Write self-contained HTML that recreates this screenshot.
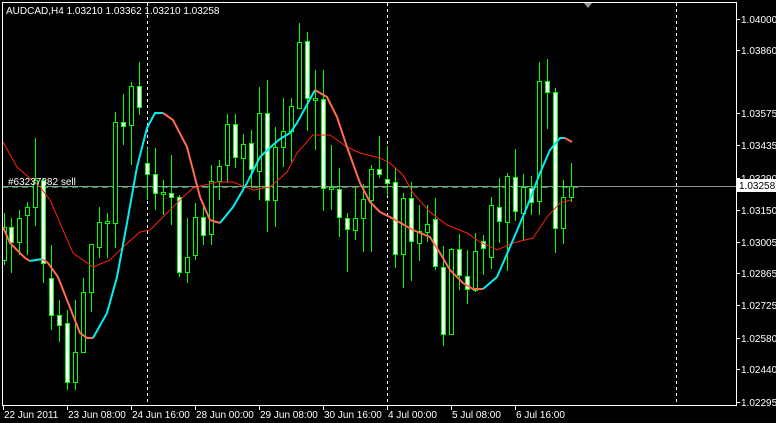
<!DOCTYPE html>
<html><head><meta charset="utf-8"><style>
html,body{margin:0;padding:0;background:#000;width:776px;height:423px;overflow:hidden}
svg{display:block}
text{font-family:"Liberation Sans",sans-serif;font-size:10px;fill:#fff}
</style></head><body>
<svg id="c" width="776" height="423" xmlns="http://www.w3.org/2000/svg">
<rect width="776" height="423" fill="#000"/>
<g stroke="#fff" stroke-dasharray="3,3" stroke-width="1" shape-rendering="crispEdges">
<line x1="147.5" y1="3" x2="147.5" y2="405"/>
<line x1="387.5" y1="3" x2="387.5" y2="405"/>
<line x1="676.5" y1="3" x2="676.5" y2="405"/>
</g>
<line x1="2" y1="186.5" x2="736" y2="186.5" stroke="#8a96a0" stroke-width="1" shape-rendering="crispEdges"/>
<line x1="2" y1="187.5" x2="580" y2="187.5" stroke="#2a9a2a" stroke-width="1" stroke-dasharray="6,4" shape-rendering="crispEdges"/>
<g id="cd" shape-rendering="crispEdges"></g>
<polyline fill="none" stroke="#ff2010" stroke-width="1" points="3,142 17,167 40,187 50,200 60,223 73,253 93,267 110,260 123,247 140,232 150,230 163,217 180,200 193,188 217,182 233,182 253,190 270,187 287,172 297,153 313,135 330,135 347,147 360,153 380,158 390,163 403,175 413,193 430,212 447,225 467,233 480,242 497,250 513,243 533,238 547,217 560,203 571,200"/>
<polyline fill="none" stroke="#ff6a50" stroke-width="2" points="3,227 10,243 25,258 30,261"/>
<polyline fill="none" stroke="#00f0f0" stroke-width="2" points="30,261 42,259"/>
<polyline fill="none" stroke="#ff6a50" stroke-width="2" points="42,259 48,263 58,277 67,300 80,333 87,338 93,338"/>
<polyline fill="none" stroke="#00f0f0" stroke-width="2" points="93,338 107,313 117,277 127,223 137,167 147,128 155,113 163,113"/>
<polyline fill="none" stroke="#ff6a50" stroke-width="2" points="163,113 173,120 187,147 200,197 210,220 220,223"/>
<polyline fill="none" stroke="#00f0f0" stroke-width="2" points="220,223 233,207 247,183 260,157 273,145 280,139 290,133 297,123 315,90"/>
<polyline fill="none" stroke="#ff6a50" stroke-width="2" points="315,90 327,97 337,117 347,147 360,183 370,202 380,212 390,217 413,230 430,237 440,253 450,270 463,283 473,289 483,289"/>
<polyline fill="none" stroke="#00f0f0" stroke-width="2" points="483,289 497,277 510,247 527,207 540,173 550,150 560,138 565,138"/>
<polyline fill="none" stroke="#ff6a50" stroke-width="2" points="565,138 572,142"/>
<text x="8" y="185">#63237382 sell</text>
<text x="6" y="14">AUDCAD,H4  1.03210 1.03362 1.03210 1.03258</text>
<polygon points="584,3 592,3 588,8" fill="#8a96a0"/>
<g stroke="#fff" stroke-width="1" fill="none" shape-rendering="crispEdges">
<polyline points="2.5,405 2.5,2.5 736.5,2.5 736.5,405.5 2,405.5"/>
</g>
<g id="ax" shape-rendering="crispEdges"></g>
<rect x="737" y="179" width="39" height="13" fill="#fff"/>
<text x="739" y="189" style="fill:#000">1.03258</text>
</svg>
<script>
var C=[[3.5,213,265,227,260,0],[11,218,273,227,242,1],[19,210,255,218,242,0],[27,202,255,207,215,0],[35,138,226,180,207,0],[43,178,283,180,263,1],[51,245,330,278,315,1],[59,300,342,315,325,1],[67,310,390,323,382,1],[75,300,390,352,382,0],[83,278,352,292,352,0],[91,244,312,244,292,0],[99,207,258,222,247,0],[107,213,258,221,223,0],[115,112,248,122,223,0],[123,94,145,122,126,1],[131,82,165,86,125,0],[139,62,115,86,107,1],[147,148,200,163,174,1],[155,148,210,174,193,1],[163,180,215,192,194,0],[171,155,225,193,197,1],[179,195,277,197,272,1],[187,218,283,257,272,0],[195,203,260,217,255,0],[203,203,245,217,235,1],[211,165,245,181,234,0],[219,160,200,166,181,0],[227,114,183,124,165,0],[235,114,168,124,157,1],[243,134,188,144,158,0],[251,130,188,143,169,1],[259,87,200,113,171,0],[267,80,232,113,200,1],[275,127,227,147,200,0],[283,98,167,131,147,0],[291,98,162,106,131,0],[299,23,108,42,108,0],[307,32,131,41,98,1],[315,70,150,98,100,0],[323,70,211,99,188,1],[331,145,210,187,189,0],[339,168,237,189,217,1],[347,213,272,218,229,1],[355,188,240,218,230,0],[363,184,252,199,218,0],[371,165,252,169,200,0],[379,136,178,169,174,1],[387,146,196,179,183,1],[395,168,268,182,254,1],[403,193,288,198,254,0],[411,182,281,198,241,1],[419,205,261,231,243,0],[427,205,242,224,232,0],[435,198,270,219,266,1],[443,246,346,267,334,1],[451,248,334,249,334,0],[459,234,290,249,275,1],[467,250,304,276,289,1],[475,233,292,251,290,0],[483,235,275,241,248,1],[491,197,269,205,257,0],[499,178,243,207,221,1],[507,173,271,176,222,0],[515,149,221,177,211,1],[523,174,241,187,213,0],[531,176,215,188,202,1],[539,62,215,81,201,0],[547,59,129,81,92,1],[555,88,253,92,228,1],[563,180,244,197,228,0],[571,163,202,186,197,0]];
var s='';C.forEach(function(c){var x=Math.round(c[0]);s+='<line x1="'+(x+.5)+'" y1="'+c[1]+'" x2="'+(x+.5)+'" y2="'+c[2]+'" stroke="#00ff00"/>';var h=c[4]-c[3];if(h<2){s+='<line x1="'+(x-2)+'" y1="'+(c[3]+.5)+'" x2="'+(x+3)+'" y2="'+(c[3]+.5)+'" stroke="#00ff00"/>';}else s+='<rect x="'+(x-1.5)+'" y="'+(c[3]+.5)+'" width="4" height="'+h+'" fill="'+(c[5]?'#fff':'#000')+'" stroke="#00ff00"/>';});
document.getElementById('cd').innerHTML=s;
var a='';[['1.04000',19],['1.03860',50],['1.03575',113],['1.03435',145],['1.03290',178],['1.03150',210],['1.03005',242],['1.02865',273],['1.02725',305],['1.02580',338],['1.02440',369],['1.02295',402]].forEach(function(p){a+='<line x1="737" y1="'+(p[1]+.5)+'" x2="740" y2="'+(p[1]+.5)+'" stroke="#fff"/><text x="741" y="'+(p[1]+4)+'">'+p[0]+'</text>';});
[['22 Jun 2011',3],['23 Jun 08:00',67],['24 Jun 16:00',131],['28 Jun 00:00',195],['29 Jun 08:00',259],['30 Jun 16:00',323],['4 Jul 00:00',387],['5 Jul 08:00',451],['6 Jul 16:00',515]].forEach(function(p){a+='<line x1="'+(p[1]+.5)+'" y1="406" x2="'+(p[1]+.5)+'" y2="410" stroke="#fff"/><text x="'+(p[1]+1)+'" y="418">'+p[0]+'</text>';});
document.getElementById('ax').innerHTML=a;
</script>
</body></html>
